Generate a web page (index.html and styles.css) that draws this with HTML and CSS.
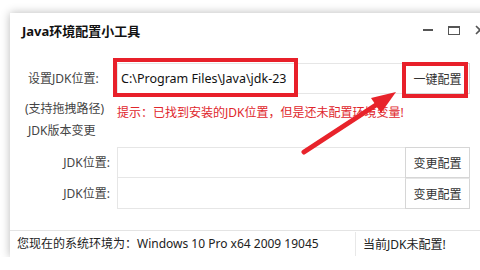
FILE: index.html
```html
<!DOCTYPE html>
<html lang="zh-CN">
  <head>
    <meta charset="UTF-8" />
    <meta name="viewport" content="width=device-width, initial-scale=1.0" />
    <title>Java环境配置小工具</title>
    <link rel="stylesheet" href="styles.css">
  </head>
  <body>
    <div class="window">
      <div class="titlebar">
        <span class="title">Java环境配置小工具</span>
        <div class="controls">
          <span class="ctl"><span class="ctl-min"></span></span>
          <span class="ctl"><span class="ctl-max"></span></span>
          <span class="ctl">
            <svg width="10" height="10" viewBox="0 0 10 10">
              <path d="M1 1 L9 9 M9 1 L1 9" stroke="#555" stroke-width="1.6" />
            </svg>
          </span>
        </div>
      </div>

      <div class="form">
        <label class="lbl lbl-main">设置JDK位置:</label>
        <div class="field">C:\Program Files\Java\jdk-23</div>
        <button class="btn">一键配置</button>

        <span class="lbl lbl-drag">(支持拖拽路径)</span>
        <p class="tip">提示：已找到安装的JDK位置，但是还未配置环境变量!</p>

        <span class="lbl lbl-group">JDK版本变更</span>

        <label class="lbl lbl-right">JDK位置:</label>
        <div class="field"></div>
        <button class="btn">变更配置</button>

        <label class="lbl lbl-right">JDK位置:</label>
        <div class="field field-last"></div>
        <button class="btn btn-last">变更配置</button>
      </div>

      <div class="statusbar">
        <span class="status-env">您现在的系统环境为：Windows 10 Pro x64 2009 19045</span>
        <span class="status-jdk">当前JDK未配置!</span>
      </div>

      <!-- screenshot annotations -->
      <div class="mark mark-path"></div>
      <div class="mark mark-btn"></div>
      <svg class="arrow" viewBox="0 0 483 244" width="483" height="244">
        <line x1="294" y1="139" x2="369" y2="90" stroke="#e8232b" stroke-width="5" stroke-linecap="round" />
        <polygon points="386,79 371,100 361,85" fill="#e8232b" />
      </svg>
    </div>
  </body>
</html>
```

FILE: styles.css
```css
body {
  margin: 0;
  background: #fff;
  font-family: "Noto Sans", "Noto Sans CJK SC", sans-serif;
  font-size: 12px;
  color: #333;
  overflow: hidden;
}
.window {
  position: relative;
  margin: 13px 0 0 10px;
  width: 483px;
  height: 244px;
  background: #fff;
  box-shadow: 0 0 9px rgba(0, 0, 0, 0.28);
  display: flex;
  flex-direction: column;
}
.titlebar {
  height: 34px;
  display: flex;
  align-items: center;
  padding-left: 12px;
}
.title {
  font-weight: bold;
  font-size: 13px;
  color: #111;
}
.controls {
  margin-left: auto;
  display: flex;
}
.ctl {
  width: 26px;
  height: 20px;
  display: flex;
  align-items: center;
  justify-content: center;
}
.ctl-min {
  width: 10px;
  height: 2px;
  background: #555;
}
.ctl-max {
  width: 10px;
  height: 6px;
  border: 1px solid #555;
  border-top-width: 2px;
}
.form {
  flex: 1;
  display: grid;
  grid-template-columns: 107px 288px 65px;
  grid-template-rows: 31px 25px 28px 31px 31px;
  padding-top: 16px;
  line-height: 17px;
}
.lbl {
  grid-column: 1;
  color: #444;
}
.lbl-main {
  padding-left: 18px;
  align-self: center;
}
.lbl-drag {
  padding: 6px 0 0 15px;
}
.lbl-group {
  padding: 3px 0 0 18px;
}
.lbl-right {
  text-align: right;
  padding-right: 7px;
  align-self: center;
}
.field {
  border: 1px solid #e6e6e6;
  border-right: none;
  display: flex;
  align-items: center;
  padding-left: 3px;
  color: #111;
  font-size: 12.5px;
}
.field-last {
  border-top: none;
}
.btn {
  margin: 0;
  border: 1px solid #d6d6d6;
  background: #fff;
  font-family: inherit;
  font-size: 12px;
  color: #333;
  padding: 0;
}
.btn-last {
  border-top-color: #e6e6e6;
}
.tip {
  grid-column: 2 / span 2;
  margin: 0;
  padding-top: 10px;
  white-space: nowrap;
  color: #e0262c;
}
.statusbar {
  height: 26px;
  border-top: 1px solid #e4e4e4;
  display: flex;
  align-items: center;
  color: #222;
}
.status-env {
  width: 338px;
  padding-left: 7px;
  border-right: 1px solid #e8e8e8;
  line-height: 24px;
}
.status-jdk {
  padding-left: 7px;
}
.mark {
  position: absolute;
  border: 4px solid #e8202a;
}
.mark-path {
  left: 103px;
  top: 45px;
  width: 177px;
  height: 31px;
}
.mark-btn {
  left: 392px;
  top: 49px;
  width: 58px;
  height: 28px;
}
.arrow {
  position: absolute;
  left: 0;
  top: 0;
}
```
